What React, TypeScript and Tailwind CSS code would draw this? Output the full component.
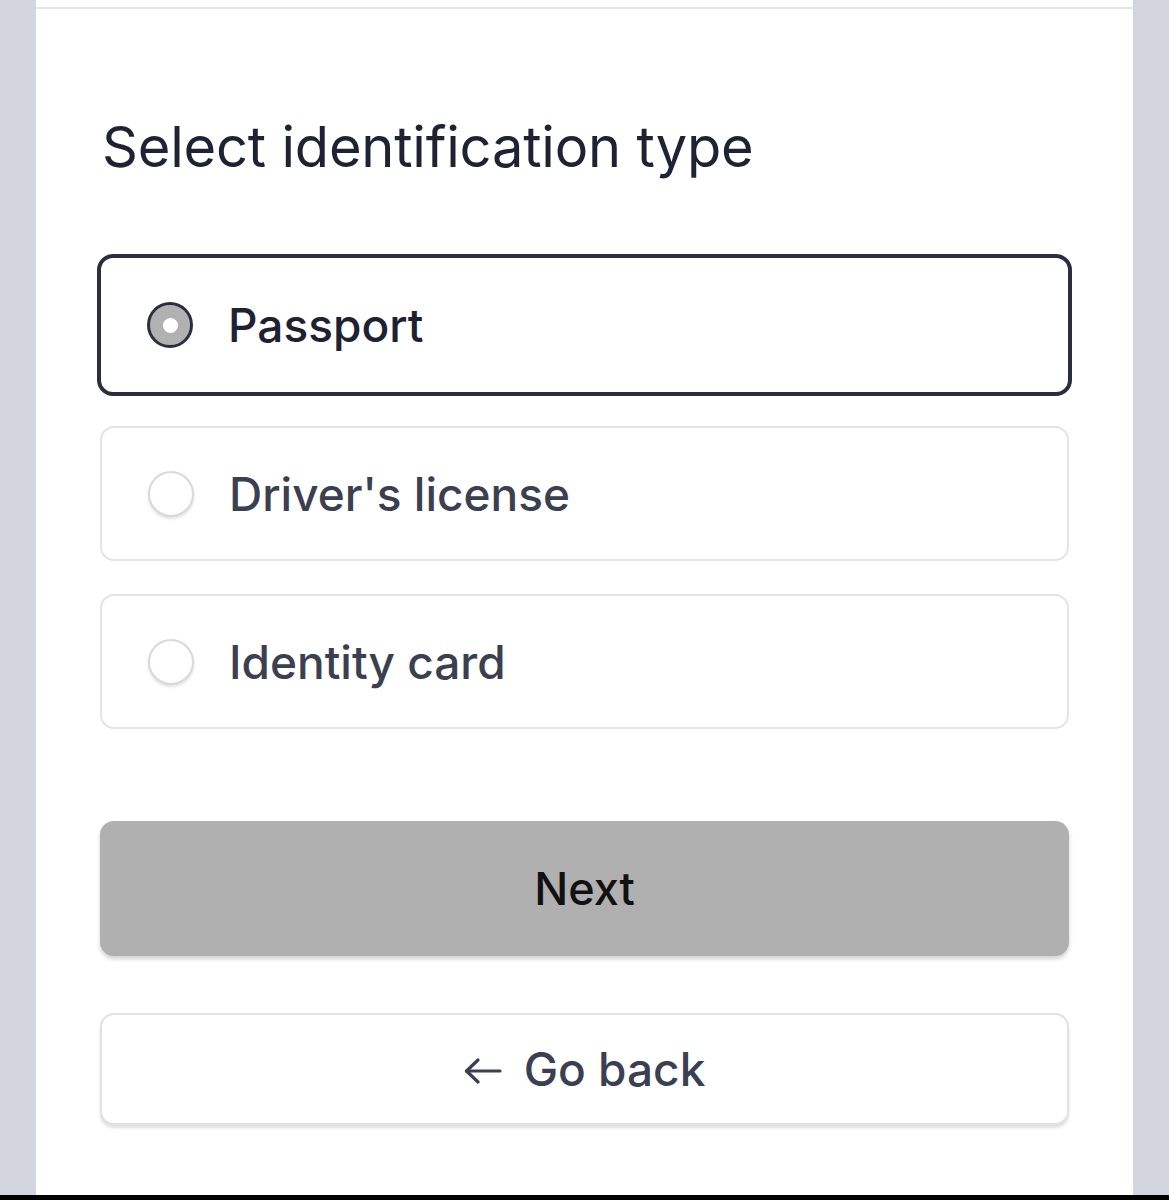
import React, { useState } from 'react';

const options = [
  { id: 'passport', label: 'Passport' },
  { id: 'license', label: "Driver's license" },
  { id: 'idcard', label: 'Identity card' },
];

function Radio({ checked }: { checked: boolean }) {
  if (checked) {
    return (
      <span className="w-[46px] h-[46px] rounded-full border-[3px] border-[#2b2e40] bg-[#b1b1b1] flex items-center justify-center shrink-0">
        <span className="w-[15px] h-[15px] rounded-full bg-white" />
      </span>
    );
  }
  return (
    <span className="w-[46px] h-[46px] rounded-full border-2 border-[#d9d9dc] bg-white shadow-[0_2px_3px_rgba(0,0,0,0.12)] shrink-0" />
  );
}

export default function App() {
  const [selected, setSelected] = useState('passport');

  return (
    <div className="w-[1169px] h-[1200px] bg-[#d3d6df] flex flex-col" style={{ fontFamily: 'Inter, "Noto Sans", sans-serif' }}>
      <div className="flex-1 flex">
        <div className="ml-[36px] w-[1097px] bg-white flex flex-col">
          <div className="h-[7px]" />
          <div className="h-[2px] bg-[#e6e7eb]" />

          <div className="px-[64px] flex flex-col">
            <h1 className="mt-[110px] ml-[2px] text-[56px] leading-none font-normal text-[#1f2233] tracking-[-0.2px]">
              Select identification type
            </h1>

            <div className="mt-[82px] flex flex-col gap-[33px]">
              {options.map((o) => {
                const active = selected === o.id;
                return (
                  <button
                    key={o.id}
                    onClick={() => setSelected(o.id)}
                    className={
                      active
                        ? '-mx-[3px] -my-[3px] h-[142px] rounded-[16px] border-4 border-[#2b2e40] bg-white flex items-center pl-[46px] text-left'
                        : 'h-[135px] rounded-[14px] border-2 border-[#e4e4e7] bg-white flex items-center pl-[46px] text-left'
                    }
                  >
                    <Radio checked={active} />
                    <span
                      className={
                        'ml-[35px] text-[46px] leading-none font-medium ' +
                        (active ? 'text-[#1e2132]' : 'text-[#3c3f50]')
                      }
                    >
                      {o.label}
                    </span>
                  </button>
                );
              })}
            </div>

            <button className="mt-[92px] h-[135px] rounded-[14px] bg-[#b0b0b0] shadow-[0_3px_4px_rgba(0,0,0,0.18)] flex items-center justify-center text-[45px] font-medium text-[#111111]">
              Next
            </button>

            <button className="mt-[57px] h-[112px] rounded-[14px] bg-white border-2 border-[#e2e2e5] shadow-[0_3px_3px_rgba(0,0,0,0.12)] flex items-center justify-center gap-[22px] text-[46px] font-medium text-[#3b3f52]">
              <svg width="38" height="26" viewBox="0 0 38 26" fill="none" stroke="currentColor" strokeWidth="3.2" strokeLinecap="round" strokeLinejoin="round" className="mt-[3px]">
                <path d="M36 13H2.5" />
                <path d="M14 2 2.5 13 14 24" />
              </svg>
              <span>Go back</span>
            </button>
          </div>
        </div>
      </div>
      <div className="h-[5px] bg-black" />
    </div>
  );
}
